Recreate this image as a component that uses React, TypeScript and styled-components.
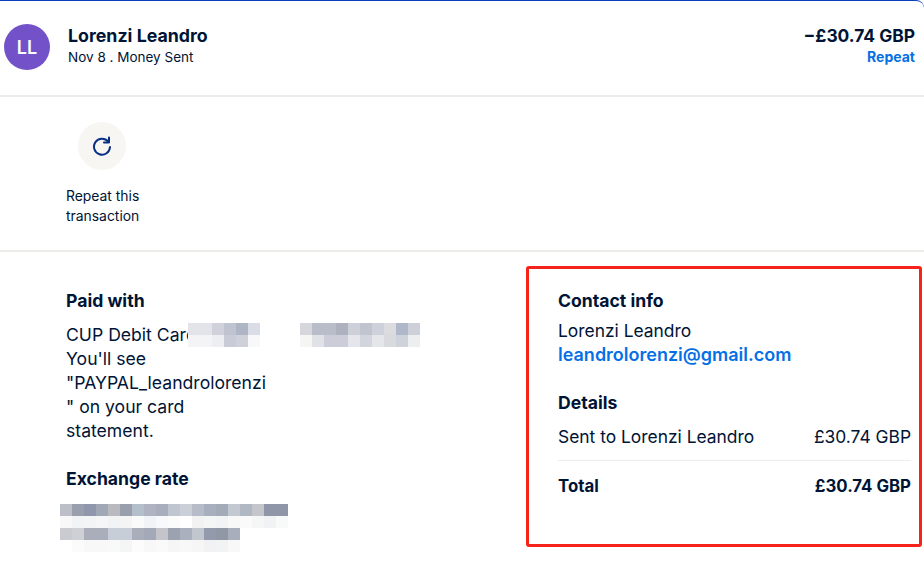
import React from "react";
import styled, { createGlobalStyle } from "styled-components";

const GlobalStyle = createGlobalStyle`
  html, body {
    margin: 0;
    padding: 0;
    background: #ffffff;
  }
  body {
    font-family: Inter, "Liberation Sans", sans-serif;
    color: #001435;
  }
`;

const Page = styled.div`
  width: 924px;
  height: 566px;
  overflow: hidden;
  box-sizing: border-box;
  border-top: 1px solid #0b3fbd;
  border-top-right-radius: 8px;
`;

const Header = styled.header`
  height: 96px;
  box-sizing: border-box;
  display: flex;
  align-items: flex-start;
  justify-content: space-between;
  padding: 23px 9px 0 4px;
  border-bottom: 2px solid #eeede9;
`;

const Person = styled.div`
  display: flex;
  gap: 18px;
`;

const Avatar = styled.div`
  width: 46px;
  height: 46px;
  border-radius: 50%;
  background: #7352c9;
  color: #ffffff;
  display: flex;
  align-items: center;
  justify-content: center;
  font-size: 18px;
  font-weight: 600;
`;

const PersonText = styled.div`
  padding-top: 1px;
`;

const Name = styled.div`
  font-size: 17.8px;
  font-weight: 700;
  line-height: 21px;
`;

const Sub = styled.div`
  font-size: 13.5px;
  line-height: 22px;
`;

const Amount = styled.div`
  text-align: right;
  padding-top: 1px;
`;

const AmountValue = styled.div`
  font-size: 17.4px;
  font-weight: 700;
  line-height: 21px;
`;

const RepeatLink = styled.a`
  display: block;
  font-size: 14px;
  font-weight: 700;
  line-height: 22px;
  color: #0570e5;
`;

const ActionBar = styled.section`
  height: 155px;
  box-sizing: border-box;
  padding: 25px 0 0 66px;
  border-bottom: 2px solid #eeede9;
`;

const ActionItem = styled.div`
  width: 72px;
  display: flex;
  flex-direction: column;
  align-items: center;
`;

const ActionCircle = styled.div`
  width: 48px;
  height: 48px;
  border-radius: 50%;
  background: #f8f6f2;
  color: #0a2f86;
  display: flex;
  align-items: center;
  justify-content: center;
`;

const ActionLabel = styled.div`
  margin-top: 16px;
  font-size: 13.9px;
  line-height: 20px;
  align-self: flex-start;
  white-space: nowrap;
`;

const Columns = styled.div`
  display: flex;
  justify-content: space-between;
  padding: 14px 2px 0 66px;
`;

const LeftColumn = styled.div`
  width: 206px;
  padding-top: 23px;
  position: relative;
`;

const RedBox = styled.div`
  width: 396px;
  height: 281px;
  box-sizing: border-box;
  border: 3px solid #f5231c;
  border-radius: 3px;
  padding: 20px 8px 0 29px;
`;

const Title = styled.h3`
  margin: 0;
  font-size: 17.6px;
  font-weight: 700;
  line-height: 24px;
`;

const Body = styled.div`
  margin-top: 6px;
  font-size: 17.4px;
  line-height: 24px;
`;

const Statement = styled(Body)`
  margin-top: 10px;
  font-size: 17.6px;
  overflow-wrap: anywhere;
`;

const Spaced = styled.div`
  margin-top: 24px;
`;

const Email = styled.a`
  display: block;
  font-size: 18px;
  font-weight: 600;
  color: #0570e5;
`;

const DetailBody = styled(Body)`
  margin-top: 10px;
`;

const Row = styled.div<{ $bold?: boolean }>`
  display: flex;
  justify-content: space-between;
  line-height: 24px;
  font-weight: ${(p) => (p.$bold ? 700 : 400)};
  font-size: ${(p) => (p.$bold ? "16.8px" : "17.4px")};
`;

const DetailRule = styled.div`
  height: 1px;
  background: #eeede9;
  margin: 11px 0 13px;
`;

const Mosaic = styled.svg<{ $left: number; $top: number }>`
  position: absolute;
  left: ${(p) => p.$left}px;
  top: ${(p) => p.$top}px;
  display: block;
`;

const RateMosaic = styled.svg`
  display: block;
  margin: 13px 0 0 -6px;
`;

// rows of blur blocks, 12px squares
const pixelate = (rows: string[][], size = 12) =>
  rows.flatMap((row, y) =>
    row.map((fill, x) => (
      <rect key={`${x}-${y}`} x={x * size} y={y * size} width={size} height={size} fill={fill} />
    ))
  );

const cardA = [
  ["#e2e4ea", "#e2e4ea", "#cfd2da", "#bfc4d0", "#aeb5c4", "#dadde6"],
  ["#f4f4f6", "#f4f4f6", "#eceef1", "#c9ccd6", "#ced1da", "#f8f8fa"],
];

const cardB = [
  ["#d5d7dd", "#b9bcc9", "#b9bcc9", "#aeb2c0", "#cdd0d9", "#c0c4cf", "#ced1da", "#dcdce0", "#aeb8c8", "#cdd0d9"],
  ["#f5f5f3", "#e0e2e8", "#cbced8", "#cbced8", "#e4e6ec", "#d2d5dd", "#e4e6ea", "#d8dade", "#cdd2db", "#eceef0"],
];

const rate = [
  ["#bcbfc8", "#9a9fae", "#8f97ad", "#a0a8b5", "#b8bac0", "#9a9fae", "#b4bfcc", "#b0b4c2", "#a8aebb", "#bfc6d2", "#cacfd8", "#b8bcc8", "#a8afbf", "#a4abb8", "#c4c8d0", "#b0b8c4", "#c4c6cc", "#8f96a8", "#8f96a8"],
  ["#f8f8f9", "#f2f3f5", "#f3f4f6", "#f6f6f8", "#f2f3f4", "#f4f4f5", "#fafafa", "#f2f3f6", "#f8f9fa", "#fafbfb", "#ffffff", "#f2f2f3", "#f4f5f5", "#f2f3f4", "#f8f8f8", "#fafafa", "#f5f6f6", "#f1f2f3", "#f8f9f9"],
  ["#cacbd0", "#cfd0d5", "#a9aeba", "#a9aeba", "#c8ced8", "#c8ced8", "#a9aeba", "#a3a9b6", "#c4c5ca", "#9ca2b0", "#aab0bd", "#c2c6ce", "#939aac", "#9098a6", "#a9aebb", "#ffffff", "#ffffff", "#ffffff", "#ffffff"],
  ["#ffffff", "#fbfbfb", "#f8f8f8", "#f8f8f9", "#f8f9f9", "#f4f5f5", "#fcfcfc", "#f8f8f9", "#fafafa", "#f6f6f7", "#f8f8f9", "#f6f6f7", "#f2f2f4", "#f2f3f4", "#f8f8f8", "#ffffff", "#ffffff", "#ffffff", "#ffffff"],
];

const App = () => (
  <>
    <GlobalStyle />
    <Page>
      <Header>
        <Person>
          <Avatar>LL</Avatar>
          <PersonText>
            <Name>Lorenzi Leandro</Name>
            <Sub>Nov 8 . Money Sent</Sub>
          </PersonText>
        </Person>
        <Amount>
          <AmountValue>−£30.74 GBP</AmountValue>
          <RepeatLink>Repeat</RepeatLink>
        </Amount>
      </Header>
      <ActionBar>
        <ActionItem>
          <ActionCircle>
            <svg width="20" height="20" viewBox="0 0 20 20" fill="none" stroke="currentColor" strokeWidth="2" strokeLinecap="round" strokeLinejoin="round">
              <path d="M16.2 5.6A8 8 0 1 0 18 11" />
              <path d="M17 1.5v5h-5" />
            </svg>
          </ActionCircle>
          <ActionLabel>
            Repeat this
            <br />
            transaction
          </ActionLabel>
        </ActionItem>
      </ActionBar>
      <Columns>
        <LeftColumn>
          <Title>Paid with</Title>
          <Statement>
            CUP Debit Card
            <br />
            You'll see "PAYPAL_leandrolorenzi" on your card statement.
          </Statement>
          <Mosaic $left={122} $top={57} width="76" height="24">{pixelate(cardA)}</Mosaic>
          <Mosaic $left={234} $top={57} width="120" height="24">{pixelate(cardB)}</Mosaic>
          <Spaced>
            <Title>Exchange rate</Title>
            <RateMosaic width="234" height="48">{pixelate(rate)}</RateMosaic>
          </Spaced>
        </LeftColumn>
        <RedBox>
          <Title>Contact info</Title>
          <Body>
            Lorenzi Leandro
            <Email>leandrolorenzi@gmail.com</Email>
          </Body>
          <Spaced>
            <Title>Details</Title>
            <DetailBody>
              <Row>
                <span>Sent to Lorenzi Leandro</span>
                <span>£30.74 GBP</span>
              </Row>
              <DetailRule />
              <Row $bold>
                <span>Total</span>
                <span>£30.74 GBP</span>
              </Row>
            </DetailBody>
          </Spaced>
        </RedBox>
      </Columns>
    </Page>
  </>
);

export default App;
